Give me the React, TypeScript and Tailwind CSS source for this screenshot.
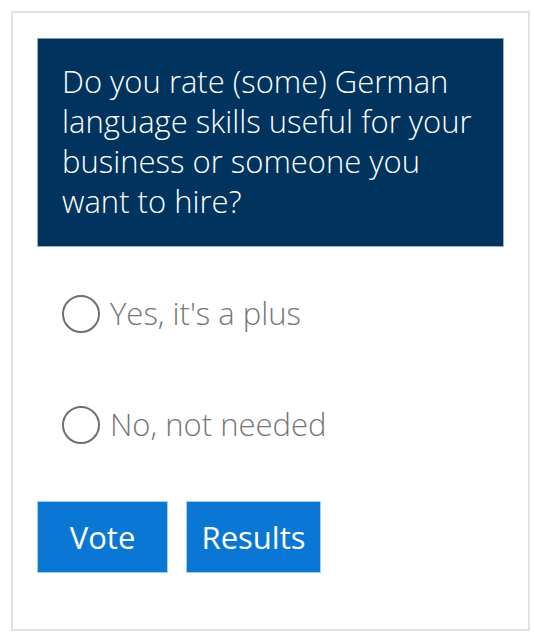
export default function App() {
  const options = ["Yes, it's a plus", "No, not needed"];
  return (
    <div className="bg-white w-[534px] h-[632px] pt-[11px] pl-[11px] font-['Open_Sans',sans-serif]">
      <div className="w-[519px] h-[620px] border-2 border-[#e2e2e2] px-[24px] pt-[25px]">
        <div className="bg-[#00345e] h-[209px] px-[24px] pt-[22px] text-white text-[31px] font-light leading-[40px] border border-[#9fb3c6] border-t-[#7f95ab]">
          Do you rate (some) German language skills useful for your business or someone you want to hire?
        </div>
        <div className="mt-[48px] flex flex-col gap-[73px] pl-[25px]">
          {options.map((o) => (
            <label key={o} className="flex items-center gap-[10px] h-[38px] text-[31px] font-light text-[#777777]">
              <span className="w-[38px] h-[38px] rounded-full border-2 border-[#6f6f6f] shrink-0" />
              <span className="leading-none -mt-[2px]">{o}</span>
            </label>
          ))}
        </div>
        <div className="mt-[57px] flex gap-[18px]">
          <button className="w-[131px] h-[72px] bg-[#0b77d4] text-white text-[31px] border border-[#a8cdef]">Vote</button>
          <button className="w-[135px] h-[72px] bg-[#0b77d4] text-white text-[31px] border border-[#a8cdef]">Results</button>
        </div>
      </div>
    </div>
  );
}
